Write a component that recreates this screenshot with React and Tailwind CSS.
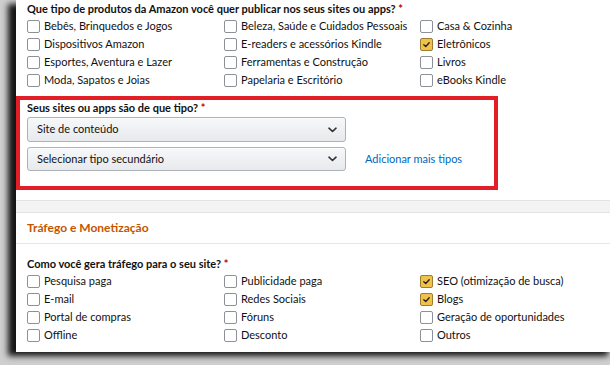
import React from "react";

const font = { fontFamily: "Lato, 'Liberation Sans', sans-serif" };

const Box = ({ checked }) =>
  checked ? (
    <span className="flex h-[13px] w-[13px] shrink-0 items-center justify-center rounded-[2px] border border-[#9c7e31] bg-[#f0c14b]">
      <svg width="9" height="9" viewBox="0 0 10 10" fill="none">
        <path d="M2 5.2 4.2 7.3 8 3" stroke="#222" strokeWidth="1.5" strokeLinecap="round" strokeLinejoin="round" />
      </svg>
    </span>
  ) : (
    <span className="h-[13px] w-[13px] shrink-0 rounded-[2px] border border-[#8d9096] bg-white" />
  );

const Option = ({ label, checked }) => (
  <label className="flex h-[18px] items-center gap-[4px] whitespace-nowrap text-[11px] text-[#111]">
    <Box checked={checked} />
    <span>{label}</span>
  </label>
);

const Grid = ({ cols }) => (
  <div className="grid grid-cols-[197px_196px_1fr]">
    {cols.map((col, i) => (
      <div key={i} className="flex flex-col">
        {col.map((o) => (
          <Option key={o.label} {...o} />
        ))}
      </div>
    ))}
  </div>
);

const Question = ({ children }) => (
  <p className="h-[16px] text-[11px] font-bold leading-[16px] text-[#111]">
    {children} <span className="text-[#c40000]">*</span>
  </p>
);

const Chevron = () => (
  <svg width="9" height="6" viewBox="0 0 9 6" fill="none">
    <path d="M1 1.2 4.5 4.5 8 1.2" stroke="#333" strokeWidth="1.6" strokeLinecap="round" strokeLinejoin="round" />
  </svg>
);

const Select = ({ value, className }) => (
  <div
    className={`flex w-[319px] items-center justify-between rounded-[3px] border border-[#adb1b8] bg-linear-to-b from-[#f7f8fa] to-[#e7e9ec] pl-[9px] pr-[8px] text-[11px] text-[#111] shadow-[0_1px_0_rgba(255,255,255,0.6)_inset] ${className}`}
  >
    <span>{value}</span>
    <Chevron />
  </div>
);

const products = [
  [
    { label: "Bebês, Brinquedos e Jogos" },
    { label: "Dispositivos Amazon" },
    { label: "Esportes, Aventura e Lazer" },
    { label: "Moda, Sapatos e Joias" },
  ],
  [
    { label: "Beleza, Saúde e Cuidados Pessoais" },
    { label: "E-readers e acessórios Kindle" },
    { label: "Ferramentas e Construção" },
    { label: "Papelaria e Escritório" },
  ],
  [
    { label: "Casa & Cozinha" },
    { label: "Eletrônicos", checked: true },
    { label: "Livros" },
    { label: "eBooks Kindle" },
  ],
];

const traffic = [
  [
    { label: "Pesquisa paga" },
    { label: "E-mail" },
    { label: "Portal de compras" },
    { label: "Offline" },
  ],
  [
    { label: "Publicidade paga" },
    { label: "Redes Sociais" },
    { label: "Fóruns" },
    { label: "Desconto" },
  ],
  [
    { label: "SEO (otimização de busca)", checked: true },
    { label: "Blogs", checked: true },
    { label: "Geração de oportunidades" },
    { label: "Outros" },
  ],
];

export default function App() {
  return (
    <div className="h-[365px] w-[610px] overflow-hidden bg-[#cfcfcf] pl-[16px]" style={font}>
      <div className="flex h-[352px] w-[600px] flex-col bg-white shadow-[-8px_4px_6px_rgba(0,0,0,0.9)]">
        <div className="px-[11px] pt-[1px]">
          <Question>Que tipo de produtos da Amazon você quer publicar nos seus sites ou apps?</Question>
          <Grid cols={products} />
        </div>

        <div className="mt-[7px] h-[94px] w-[482px] border-4 border-[#e21f26] pl-[7px]">
          <Question>Seus sites ou apps são de que tipo?</Question>
          <Select value="Site de conteúdo" className="mt-[1px] h-[25px]" />
          <div className="mt-[5px] flex items-center gap-[19px]">
            <Select value="Selecionar tipo secundário" className="h-[24px]" />
            <a className="text-[11px] text-[#0066c0]">Adicionar mais tipos</a>
          </div>
        </div>

        <div className="mt-[10px] h-[13px] border-y border-[#e3e3e3] bg-[#f3f3f3]" />

        <div className="flex h-[31px] items-center border-b border-[#e7e7e7] px-[11px]">
          <h3 className="text-[12px] font-bold text-[#c45500]">Tráfego e Monetização</h3>
        </div>

        <div className="px-[11px] pt-[12px]">
          <Question>Como você gera tráfego para o seu site?</Question>
          <Grid cols={traffic} />
        </div>
      </div>
    </div>
  );
}
